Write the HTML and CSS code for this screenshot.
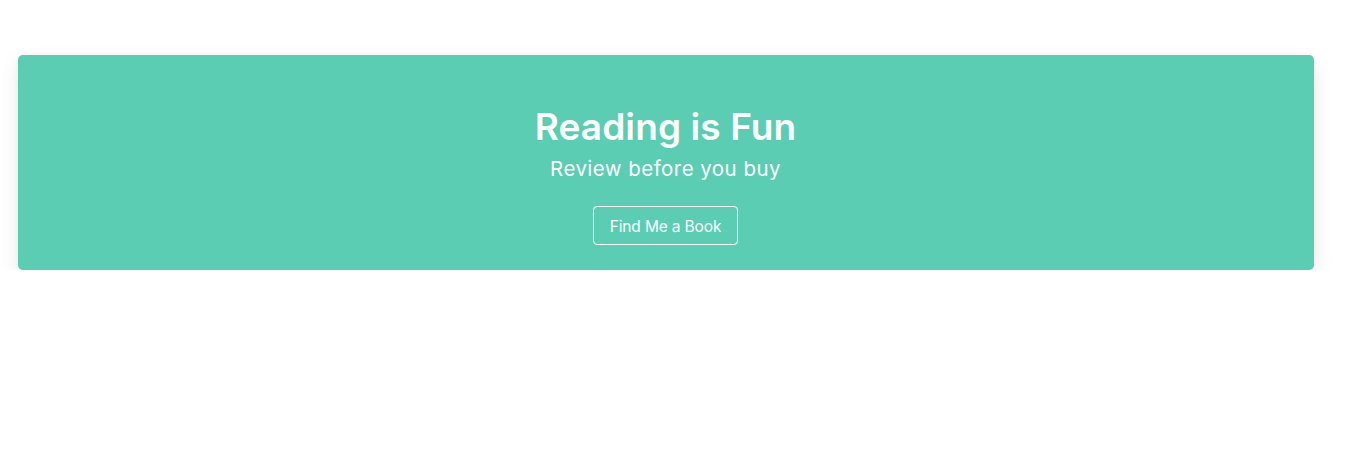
FILE: index.html
```html
<!DOCTYPE html>
<html lang="en">
<head>
<meta charset="utf-8">
<title>Reading is Fun</title>
<link rel="stylesheet" href="styles.css">
</head>
<body>
<main class="page">
  <section class="hero">
    <h1 class="hero-title">Reading is Fun</h1>
    <p class="hero-subtitle">Review before you buy</p>
    <button class="hero-button" type="button">Find Me a Book</button>
  </section>
</main>
</body>
</html>
```
FILE: styles.css
```css
* { box-sizing: border-box; }
html, body { margin: 0; padding: 0; background: #ffffff; }
body { font-family: Inter, "Noto Sans", "Liberation Sans", sans-serif; }
.page {
  padding: 55px 51px 0 18px;
}
.hero {
  background: #5acdb3;
  border-radius: 5px;
  box-shadow: 0 8px 20px rgba(0, 0, 0, 0.09), 0 0 4px rgba(0,0,0,0.03);
  height: 215px;
  padding: 52px 21px 25px 20px;
  display: flex;
  flex-direction: column;
  align-items: center;
  color: #ffffff;
}
.hero-title {
  margin: 0;
  font-size: 37px;
  font-weight: 600;
  line-height: 40.5px;
  letter-spacing: 0.1px;
}
.hero-subtitle {
  margin: 8.5px 0 0;
  font-size: 20.5px;
  font-weight: 400;
  line-height: 25px;
  letter-spacing: 0.45px;
}
.hero-button {
  margin-top: 25px;
  width: 145px;
  height: 39px;
  background: transparent;
  border: 1px solid #ffffff;
  border-radius: 4px;
  color: #ffffff;
  font-family: inherit;
  font-size: 15.5px;
  letter-spacing: -0.15px;
  padding: 1px 0 0;
}
```
